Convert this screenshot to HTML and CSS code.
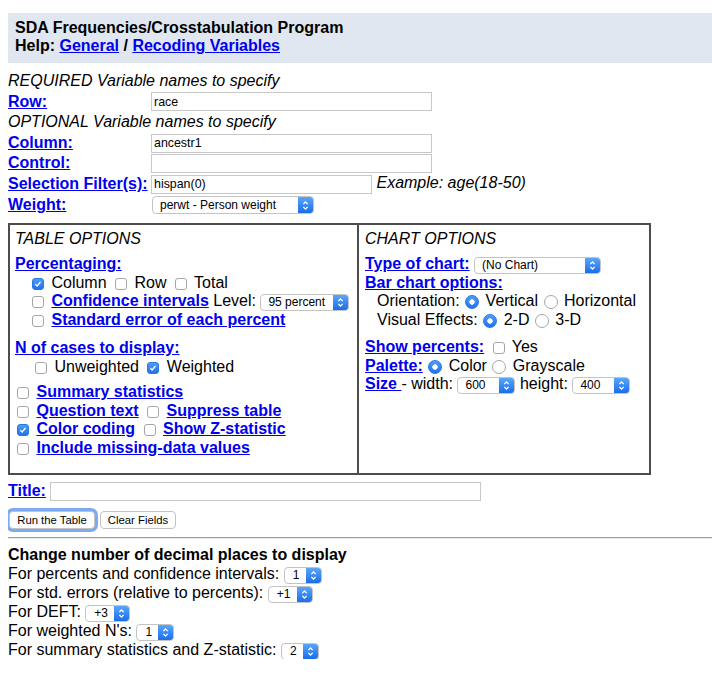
FILE: index.html
```html
<!DOCTYPE html>
<html>
<head>
<meta charset="utf-8">
<title>SDA Frequencies/Crosstabulation Program</title>
<link rel="stylesheet" href="styles.css">
</head>
<body>
<div class="hdr">
  <div>SDA Frequencies/Crosstabulation Program</div>
  <div>Help: <a href="#">General</a> / <a href="#">Recoding Variables</a></div>
</div>

<div class="vars">
  <div class="span it">REQUIRED Variable names to specify</div>
  <div><a class="lbl" href="#">Row:</a></div>
  <div><input class="txt" type="text" value="race"></div>
  <div class="span it">OPTIONAL Variable names to specify</div>
  <div><a class="lbl" href="#">Column:</a></div>
  <div><input class="txt" type="text" value="ancestr1"></div>
  <div><a class="lbl" href="#">Control:</a></div>
  <div><input class="txt" type="text" value=""></div>
  <div><a class="lbl" href="#">Selection Filter(s):</a></div>
  <div class="nw"><input class="txt short" type="text" value="hispan(0)"> <span class="it">Example: age(18-50)</span></div>
  <div><a class="lbl" href="#">Weight:</a></div>
  <div><span class="sel w-weight"><span class="sel-t">perwt - Person weight</span><span class="sel-a"><svg viewBox="0 0 16 17" width="16" height="17"><path d="M5.5 7 L8 4.5 L10.5 7 M5.5 10 L8 12.5 L10.5 10" fill="none" stroke="#fff" stroke-width="1.4"/></svg></span></span></div>
</div>

<div class="opts">
  <div class="cell left">
    <div class="ttl it">TABLE OPTIONS</div>
    <div class="r gap1"><a class="lbl" href="#">Percentaging:</a></div>
    <div class="r ind1"><span class="cb on"><svg viewBox="0 0 12 12"><path d="M2.8 6.2 L5 8.4 L9 3.6" fill="none" stroke="#fff" stroke-width="1.6"/></svg></span> Column <span class="cb"></span> Row <span class="cb"></span> Total</div>
    <div class="r ind1"><span class="cb"></span> <a class="lbl" href="#">Confidence intervals</a> Level: <span class="sel w-pct"><span class="sel-t">95 percent</span><span class="sel-a"><svg viewBox="0 0 16 17" width="16" height="17"><path d="M5.5 7 L8 4.5 L10.5 7 M5.5 10 L8 12.5 L10.5 10" fill="none" stroke="#fff" stroke-width="1.4"/></svg></span></span></div>
    <div class="r ind1"><span class="cb"></span> <a class="lbl" href="#">Standard error of each percent</a></div>
    <div class="r gap2"><a class="lbl" href="#">N of cases to display:</a></div>
    <div class="r ind2"><span class="cb"></span> Unweighted <span class="cb on"><svg viewBox="0 0 12 12"><path d="M2.8 6.2 L5 8.4 L9 3.6" fill="none" stroke="#fff" stroke-width="1.6"/></svg></span> Weighted</div>
    <div class="r gap3 flush"><span class="cb"></span> <a class="lbl" href="#">Summary statistics</a></div>
    <div class="r flush"><span class="cb"></span> <a class="lbl" href="#">Question text</a> <span class="cb"></span> <a class="lbl" href="#">Suppress table</a></div>
    <div class="r flush"><span class="cb on"><svg viewBox="0 0 12 12"><path d="M2.8 6.2 L5 8.4 L9 3.6" fill="none" stroke="#fff" stroke-width="1.6"/></svg></span> <a class="lbl" href="#">Color coding</a> <span class="cb"></span> <a class="lbl" href="#">Show Z-statistic</a></div>
    <div class="r flush"><span class="cb"></span> <a class="lbl" href="#">Include missing-data values</a></div>
  </div>
  <div class="cell right">
    <div class="ttl it">CHART OPTIONS</div>
    <div class="r gap1"><a class="lbl" href="#">Type of chart:</a> <span class="sel w-chart"><span class="sel-t">(No Chart)</span><span class="sel-a"><svg viewBox="0 0 16 17" width="16" height="17"><path d="M5.5 7 L8 4.5 L10.5 7 M5.5 10 L8 12.5 L10.5 10" fill="none" stroke="#fff" stroke-width="1.4"/></svg></span></span></div>
    <div class="r"><a class="lbl" href="#">Bar chart options:</a></div>
    <div class="r ind3">Orientation: <span class="rd on"></span> Vertical <span class="rd"></span> Horizontal</div>
    <div class="r ind3">Visual Effects: <span class="rd on"></span> 2-D <span class="rd"></span> 3-D</div>
    <div class="r gap4"><a class="lbl" href="#">Show percents:</a> <span class="cb"></span> Yes</div>
    <div class="r"><a class="lbl" href="#">Palette:</a> <span class="rd on"></span> Color <span class="rd"></span> Grayscale</div>
    <div class="r"><a class="lbl" href="#">Size </a>- width: <span class="sel w-size"><span class="sel-t">600</span><span class="sel-a"><svg viewBox="0 0 16 17" width="16" height="17"><path d="M5.5 7 L8 4.5 L10.5 7 M5.5 10 L8 12.5 L10.5 10" fill="none" stroke="#fff" stroke-width="1.4"/></svg></span></span> height: <span class="sel w-size"><span class="sel-t">400</span><span class="sel-a"><svg viewBox="0 0 16 17" width="16" height="17"><path d="M5.5 7 L8 4.5 L10.5 7 M5.5 10 L8 12.5 L10.5 10" fill="none" stroke="#fff" stroke-width="1.4"/></svg></span></span></div>
  </div>
</div>

<div class="titlerow"><a class="lbl" href="#">Title:</a> <input class="txt wide" type="text" value=""></div>

<div class="btns">
  <button class="btn focus" type="button">Run the Table</button>
  <button class="btn clear" type="button">Clear Fields</button>
</div>

<hr class="rule">

<div class="dec">
  <div class="dhead">Change number of decimal places to display</div>
  <div class="dr">For percents and confidence intervals: <span class="sel w-n"><span class="sel-t">1</span><span class="sel-a"><svg viewBox="0 0 16 17" width="16" height="17"><path d="M5.5 7 L8 4.5 L10.5 7 M5.5 10 L8 12.5 L10.5 10" fill="none" stroke="#fff" stroke-width="1.4"/></svg></span></span></div>
  <div class="dr">For std. errors (relative to percents): <span class="sel w-p"><span class="sel-t">+1</span><span class="sel-a"><svg viewBox="0 0 16 17" width="16" height="17"><path d="M5.5 7 L8 4.5 L10.5 7 M5.5 10 L8 12.5 L10.5 10" fill="none" stroke="#fff" stroke-width="1.4"/></svg></span></span></div>
  <div class="dr">For DEFT: <span class="sel w-p"><span class="sel-t">+3</span><span class="sel-a"><svg viewBox="0 0 16 17" width="16" height="17"><path d="M5.5 7 L8 4.5 L10.5 7 M5.5 10 L8 12.5 L10.5 10" fill="none" stroke="#fff" stroke-width="1.4"/></svg></span></span></div>
  <div class="dr">For weighted N's: <span class="sel w-n"><span class="sel-t">1</span><span class="sel-a"><svg viewBox="0 0 16 17" width="16" height="17"><path d="M5.5 7 L8 4.5 L10.5 7 M5.5 10 L8 12.5 L10.5 10" fill="none" stroke="#fff" stroke-width="1.4"/></svg></span></span></div>
  <div class="dr">For summary statistics and Z-statistic: <span class="sel w-n"><span class="sel-t">2</span><span class="sel-a"><svg viewBox="0 0 16 17" width="16" height="17"><path d="M5.5 7 L8 4.5 L10.5 7 M5.5 10 L8 12.5 L10.5 10" fill="none" stroke="#fff" stroke-width="1.4"/></svg></span></span></div>
</div>
</body>
</html>
```

FILE: styles.css
```css
body {
  margin: 8px 0 8px 8px;
  font-family: "Liberation Sans", Arial, sans-serif;
  font-size: 16px;
  color: #000;
  background: #fff;
}

a { color: #0000ee; text-decoration: underline; }
.lbl { font-weight: bold; }
.it { font-style: italic; }
.nw { white-space: nowrap; }

.hdr {
  margin-top: 5px;
  background: #e0e7f0;
  padding: 6px 7px 7px;
  font-weight: bold;
  line-height: 18.4px;
}
.hdr a { font-weight: bold; }

.vars {
  margin-top: 8px;
  display: grid;
  grid-template-columns: 143px 1fr;
  grid-auto-rows: 20.6px;
  align-items: center;
}
.vars .span { grid-column: 1 / 3; }

.txt {
  box-sizing: border-box;
  width: 281px;
  height: 19px;
  border: 1px solid #c8c8c8;
  padding: 0 2px;
  margin: 0;
  font-family: "Liberation Sans", Arial, sans-serif;
  font-size: 12.4px;
  color: #000;
  background: #fff;
  vertical-align: middle;
  outline: none;
}
.txt.short { width: 221px; }
.txt.wide { width: 431px; }

.sel {
  display: inline-flex;
  vertical-align: middle;
  box-sizing: border-box;
  height: 17px;
  border: 1px solid #c4c4c4;
  border-radius: 4px;
  background: #fff;
  overflow: hidden;
  font-size: 12px;
  line-height: 15px;
  color: #000;
  white-space: nowrap;
}
.sel-t { flex: 1; padding-left: 7px; overflow: hidden; }
.sel-a {
  width: 15px;
  flex: none;
  background: linear-gradient(#5aa6fb, #1c6ee9);
  display: flex;
  align-items: center;
  justify-content: center;
}
.sel-a svg { display: block; width: 15px; height: 15px; }
.w-weight { width: 162px; height: 18px; margin-left: 1px; line-height: 16px; }
.w-pct { width: 89px; }
.w-chart { width: 127px; }
.w-size { width: 58px; }
.w-n { width: 38px; }
.w-p { width: 45px; }
.w-n .sel-t, .w-p .sel-t { padding-left: 8px; }

.opts {
  margin-top: 8px;
  width: 643px;
  height: 252px;
  box-sizing: border-box;
  border: 2px solid #4d4d4d;
  display: grid;
  grid-template-columns: 349px 1fr;
}
.cell { padding-top: 4.6px; }
.left { border-right: 2px solid #4d4d4d; padding-left: 5px; }
.right { padding-left: 6px; }
.ttl { line-height: 18.4px; }

.r {
  height: 18.5px;
  line-height: 18.5px;
  white-space: nowrap;
}
.gap1 { margin-top: 7.3px; }
.gap2 { margin-top: 10px; }
.gap3 { margin-top: 7.2px; }
.gap4 { margin-top: 9.2px; }
.ind1 { padding-left: 13px; }
.ind2 { padding-left: 16px; }
.ind3 { padding-left: 12px; }
.flush { margin-left: -2px; }

.cb {
  display: inline-block;
  box-sizing: border-box;
  width: 12px;
  height: 12px;
  border: 1px solid #a6a6a6;
  border-radius: 3px;
  background: #fff;
  vertical-align: middle;
  margin: 0 3px 0 4px;
}
.cb.on {
  background: linear-gradient(#4f9dfa, #1f73ec);
  border-color: #2a77e6;
}
.cb svg { display: block; width: 10px; height: 10px; }

.rd {
  display: inline-block;
  box-sizing: border-box;
  width: 14px;
  height: 14px;
  border-radius: 50%;
  border: 1px solid #a6a6a6;
  background: #fff;
  vertical-align: middle;
  margin: 0 2px 0 1px;
}
.rd.on {
  border-color: #2676e8;
  background: radial-gradient(circle, #fff 0 2.4px, transparent 3px), linear-gradient(#4f9dfa, #1f73ec);
}

.titlerow {
  margin-top: 6px;
  height: 20.6px;
  line-height: 20.6px;
  white-space: nowrap;
}

.btns {
  margin-top: 9px;
  display: flex;
  gap: 5px;
  padding-left: 1px;
}
.btn {
  box-sizing: border-box;
  height: 18px;
  padding: 0;
  margin: 0;
  border: 1px solid #c3c3c3;
  border-radius: 4px;
  background: #fff;
  font-family: "Liberation Sans", Arial, sans-serif;
  font-size: 11.3px;
  color: #000;
  line-height: 16px;
  white-space: nowrap;
  text-align: center;
}
.btn.focus {
  width: 86px;
  box-shadow: 0 0 0 3px #7eaaf0;
}
.btn.clear { width: 76px; }

.rule {
  margin: 8px 0 0;
  height: 0;
  border: 0;
  border-top: 1px solid #9b9b9b;
  border-bottom: 1px solid #ececec;
}

.dec { margin-top: 7.5px; }
.dhead { font-weight: bold; line-height: 18.4px; }
.dr { height: 19px; line-height: 19px; white-space: nowrap; }
```
